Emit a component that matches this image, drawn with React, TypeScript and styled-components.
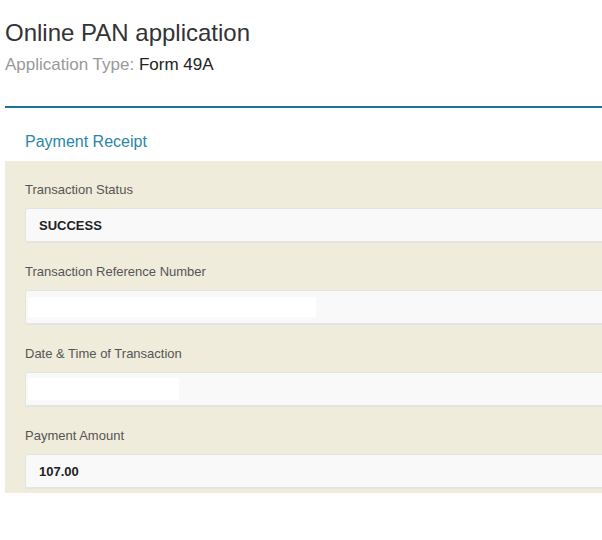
import React from "react";
import styled, { createGlobalStyle } from "styled-components";

const Global = createGlobalStyle`
  html, body { margin: 0; padding: 0; background: #fff; overflow: hidden; }
  body { font-family: "Liberation Sans", Arial, sans-serif; }
`;

const Page = styled.div`
  padding: 18px 0 0 5px;
`;

const Title = styled.h1`
  margin: 0;
  font-size: 24px;
  line-height: 29px;
  font-weight: normal;
  color: #333;
`;

const SubTitle = styled.div`
  margin-top: 8px;
  font-size: 17px;
  line-height: 20px;
  color: #999;
  span { color: #222; }
`;

const Divider = styled.div`
  margin-top: 31px;
  height: 2px;
  background: #1b7791;
`;

const SectionHead = styled.h2`
  margin: 0;
  padding: 23px 0 0 20px;
  height: 53px;
  box-sizing: border-box;
  font-size: 16px;
  line-height: 22px;
  font-weight: normal;
  color: #2a87a6;
`;

const Panel = styled.div`
  background: #efecdc;
  padding: 20px 0 4px 20px;
  display: flex;
  flex-direction: column;
`;

const Field = styled.div`
  display: flex;
  flex-direction: column;
  & + & { margin-top: 20px; }
`;

const Label = styled.label`
  font-size: 13px;
  line-height: 18px;
  color: #555;
  margin-bottom: 9px;
`;

const ValueBox = styled.div`
  box-sizing: border-box;
  height: 35px;
  display: flex;
  align-items: center;
  padding: 0 13px;
  background: #f9f9f9;
  border: 1px solid #e4e4e1;
  border-right: none;
  border-bottom-width: 2px;
  border-radius: 3px 0 0 3px;
  font-size: 13px;
  font-weight: bold;
  color: #222;
`;

const Redaction = styled.span<{ $w: number; $h: number }>`
  display: block;
  margin-left: -11px;
  width: ${(p) => p.$w}px;
  height: ${(p) => p.$h}px;
  background: #fff;
`;

export default function App() {
  return (
    <>
      <Global />
      <Page>
        <Title>Online PAN application</Title>
        <SubTitle>
          Application Type: <span>Form 49A</span>
        </SubTitle>
        <Divider />
        <SectionHead>Payment Receipt</SectionHead>
        <Panel>
          <Field>
            <Label>Transaction Status</Label>
            <ValueBox>SUCCESS</ValueBox>
          </Field>
          <Field>
            <Label>Transaction Reference Number</Label>
            <ValueBox>
              <Redaction $w={288} $h={20} />
            </ValueBox>
          </Field>
          <Field>
            <Label>Date &amp; Time of Transaction</Label>
            <ValueBox>
              <Redaction $w={151} $h={22} />
            </ValueBox>
          </Field>
          <Field>
            <Label>Payment Amount</Label>
            <ValueBox>107.00</ValueBox>
          </Field>
        </Panel>
      </Page>
    </>
  );
}
